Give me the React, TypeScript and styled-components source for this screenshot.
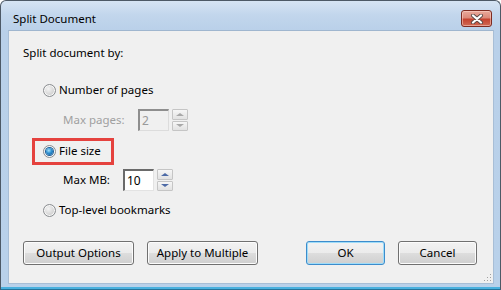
import styled, { createGlobalStyle, css } from "styled-components";

const GlobalStyle = createGlobalStyle`
  html, body {
    margin: 0;
    padding: 0;
    background: #ffffff;
  }
  * {
    box-sizing: border-box;
  }
  body {
    font-family: "Noto Sans", "Open Sans", sans-serif;
    font-size: 11.5px;
    color: #000;
  }
`;

const Window = styled.div`
  width: 501px;
  height: 290px;

  display: flex;
  flex-direction: column;

  border: 1px solid #4d5966;
  border-bottom-color: #25739a;
  border-radius: 6px 6px 0 0;
  overflow: hidden;

  background: linear-gradient(to bottom, #d6e4f3 0px, #c2d6ec 14px, #b9d0e9 30px, #b9d1ea 100%);
`;

const TitleBar = styled.div`
  height: 29px;
  flex-shrink: 0;

  display: flex;
  flex-direction: row;
  align-items: flex-start;
  justify-content: space-between;

  padding: 9px 8px 0 12px;
`;

const Title = styled.span`
  line-height: 17px;
  font-size: 11.5px;
  color: #000;
`;

const CloseButton = styled.div`
  width: 31px;
  height: 17px;

  display: flex;
  align-items: center;
  justify-content: center;

  border: 1px solid #7d2b21;
  border-radius: 3px;
  background: linear-gradient(to bottom, #e9a99b 0%, #dc8a7a 45%, #c5432f 55%, #d06a55 100%);
  box-shadow: inset 0 0 0 1px rgba(255, 220, 210, 0.5);

  svg {
    display: block;
  }
`;

const Frame = styled.div`
  flex: 1;
  min-height: 0;

  display: flex;
  padding: 0 6px 5px 7px;
  box-shadow: inset 0 -2px 0 #49b0de;
`;

const Client = styled.div`
  flex: 1;
  position: relative;

  display: flex;
  flex-direction: column;

  background: #f0f0f0;
  border: 1px solid #a8bed6;
  border-top-color: #9fb6cf;

  padding: 14px 16px 0 14px;
`;

const Heading = styled.div`
  height: 16px;
  line-height: 16px;
`;

const Options = styled.div`
  margin-top: 21px;

  display: flex;
  flex-direction: column;
  gap: 11px;
`;

const RadioRow = styled.label<{ $highlight?: boolean }>`
  position: relative;
  align-self: flex-start;

  height: 16px;
  margin-left: 20px;

  display: flex;
  flex-direction: row;
  align-items: center;
  gap: 3px;

  line-height: 16px;

  ${({ $highlight }) =>
    $highlight &&
    css`
      margin-top: 1px;
      margin-bottom: -1px;

      &::after {
        content: "";
        position: absolute;
        top: -5px;
        bottom: -6px;
        left: -11px;
        right: -13px;
        border: 3px solid #e5423e;
        pointer-events: none;
      }
    `}
`;

const Radio = styled.span<{ $checked?: boolean }>`
  width: 13px;
  height: 13px;
  flex-shrink: 0;

  display: flex;
  align-items: center;
  justify-content: center;

  border-radius: 50%;
  border: 1px solid #8a8d90;
  background: radial-gradient(circle at 40% 35%, #f4f4f4 0%, #d4d4d4 60%, #bdbdbd 100%);
  box-shadow: inset 0 0 0 1px #f8f8f8;

  &::before {
    content: "";
    display: ${({ $checked }) => ($checked ? "block" : "none")};
    width: 7px;
    height: 7px;
    border-radius: 50%;
    background: radial-gradient(circle at 40% 35%, #a8e2fb 0%, #2d8fd0 45%, #0e4f8f 100%);
    box-shadow: 0 0 0 1px #1d5f98;
  }

  ${({ $checked }) =>
    $checked &&
    css`
      background: radial-gradient(circle, #ffffff 0%, #f3f3f3 70%, #d9d9d9 100%);
    `}
`;

const SpinRow = styled.div<{ $disabled?: boolean }>`
  height: 22px;
  margin-left: 40px;

  display: flex;
  flex-direction: row;
  align-items: center;

  color: ${({ $disabled }) => ($disabled ? "#a0a0a0" : "#000")};
`;

const SpinLabel = styled.span<{ $width: number }>`
  width: ${({ $width }) => $width}px;
  flex-shrink: 0;
  line-height: 16px;
`;

const SpinInput = styled.div<{ $disabled?: boolean }>`
  width: 31px;
  height: 22px;

  display: flex;
  align-items: center;
  padding-left: 2px;

  border-style: solid;
  border-width: 2px 1px 1px 2px;
  border-color: ${({ $disabled }) =>
    $disabled ? "#8e8e8e #dcdcdc #dcdcdc #8e8e8e" : "#6a6a6a #e3e3e3 #e3e3e3 #6a6a6a"};
  background: ${({ $disabled }) => ($disabled ? "#f0f0f0" : "#ffffff")};

  font-size: 12px;
  color: ${({ $disabled }) => ($disabled ? "#9a9a9a" : "#000")};
`;

const Spinner = styled.div`
  width: 16px;
  height: 22px;
  margin-left: 3px;

  display: flex;
  flex-direction: column;
  gap: 1px;
`;

const SpinButton = styled.div`
  flex: 1;

  display: flex;
  align-items: center;
  justify-content: center;

  border: 1px solid #c5c5c5;
  border-radius: 1px;
  background: linear-gradient(to bottom, #f6f6f6, #e2e2e2);
`;

const Arrow = styled.span<{ $down?: boolean; $disabled?: boolean }>`
  width: 0;
  height: 0;
  border-left: 4px solid transparent;
  border-right: 4px solid transparent;
  ${({ $down, $disabled }) => {
    const color = $disabled ? "#a8a8a8" : "#4d6aa6";
    return $down
      ? css`border-top: 3px solid ${color};`
      : css`border-bottom: 3px solid ${color};`;
  }}
`;

const ButtonBar = styled.div`
  margin-top: 23px;

  display: flex;
  flex-direction: row;
  justify-content: space-between;
`;

const ButtonGroup = styled.div`
  display: flex;
  flex-direction: row;
  gap: 13px;
`;

const Button = styled.div<{ $width: number; $default?: boolean }>`
  width: ${({ $width }) => $width}px;
  height: 24px;

  display: flex;
  align-items: center;
  justify-content: center;

  border: 1px solid ${({ $default }) => ($default ? "#3c8ccc" : "#707070")};
  border-radius: 3px;
  background: linear-gradient(to bottom, #f2f2f2 0%, #ebebeb 50%, #dddddd 51%, #cfcfcf 100%);
  box-shadow: inset 0 0 0 1px ${({ $default }) => ($default ? "#9fdcf8" : "#fcfcfc")};

  line-height: 16px;
  color: #000;
`;

const Grip = styled.svg`
  position: absolute;
  right: 1px;
  bottom: 1px;
`;

function SpinBox({ value, disabled }: { value: string; disabled?: boolean }) {
  return (
    <>
      <SpinInput $disabled={disabled}>{value}</SpinInput>
      <Spinner>
        <SpinButton><Arrow $disabled={disabled} /></SpinButton>
        <SpinButton><Arrow $down $disabled={disabled} /></SpinButton>
      </Spinner>
    </>
  );
}

export default function App() {
  return (
    <>
      <GlobalStyle />
      <Window>
        <TitleBar>
          <Title>Split Document</Title>
          <CloseButton>
            <svg width="14" height="10" viewBox="0 0 14 10">
              <path d="M3 1.5 L11 8.5 M11 1.5 L3 8.5" stroke="#5a4a48" strokeWidth="4" strokeLinecap="round" />
              <path d="M3 1.5 L11 8.5 M11 1.5 L3 8.5" stroke="#ffffff" strokeWidth="2.2" strokeLinecap="round" />
            </svg>
          </CloseButton>
        </TitleBar>
        <Frame>
          <Client>
            <Heading>Split document by:</Heading>
            <Options>
              <RadioRow>
                <Radio />
                Number of pages
              </RadioRow>
              <SpinRow $disabled>
                <SpinLabel $width={75}>Max pages:</SpinLabel>
                <SpinBox value="2" disabled />
              </SpinRow>
              <RadioRow $highlight>
                <Radio $checked />
                File size
              </RadioRow>
              <SpinRow>
                <SpinLabel $width={60}>Max MB:</SpinLabel>
                <SpinBox value="10" />
              </SpinRow>
              <RadioRow>
                <Radio />
                Top-level bookmarks
              </RadioRow>
            </Options>
            <ButtonBar>
              <ButtonGroup>
                <Button $width={111}>Output Options</Button>
                <Button $width={111}>Apply to Multiple</Button>
              </ButtonGroup>
              <ButtonGroup>
                <Button $width={79} $default>OK</Button>
                <Button $width={79}>Cancel</Button>
              </ButtonGroup>
            </ButtonBar>
            <Grip width="9" height="9" viewBox="0 0 9 9">
              {[
                [7, 1], [7, 4], [4, 4], [7, 7], [4, 7], [1, 7],
              ].map(([x, y]) => (
                <rect key={`${x}-${y}`} x={x} y={y} width="1" height="1" fill="#a0a0a0" />
              ))}
            </Grip>
          </Client>
        </Frame>
      </Window>
    </>
  );
}
